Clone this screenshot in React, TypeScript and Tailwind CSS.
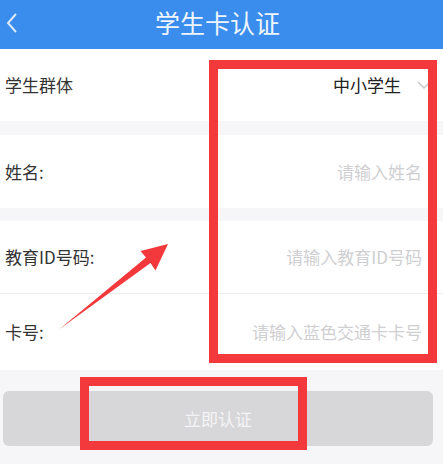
const FONT = "font-['Noto_Sans_CJK_SC','Noto_Sans',sans-serif]";

type Row = { label: string; hint: string; h: string };

const Field = ({ label, hint, h }: Row) => (
  <div className={`flex items-center justify-between bg-white pl-[5px] pr-[21px] ${h}`}>
    <span className="text-[17px] text-[#333]">{label}</span>
    <span className="text-[17px] text-[#cfcfd2]">{hint}</span>
  </div>
);

export default function App() {
  return (
    <div className={`relative h-[464px] w-[443px] overflow-hidden bg-[#f6f6f8] ${FONT}`}>
      {/* Header */}
      <header className="relative flex h-[49px] items-center justify-center bg-[#3a8ded]">
        <svg className="absolute left-[6px] top-[12px]" width="12" height="22" viewBox="0 0 12 22">
          <path d="M10 2 L2 11 L10 20" fill="none" stroke="#dbe9fb" strokeWidth="2" />
        </svg>
        <h1 className="pb-[3px] pr-[8px] text-[25px] text-[#eef5fe]">学生卡认证</h1>
      </header>

      {/* Group select */}
      <div className="flex h-[72px] items-center justify-between bg-white pl-[5px] pr-[12px]">
        <span className="text-[17px] text-[#333]">学生群体</span>
        <div className="flex items-center gap-[16px]">
          <span className="text-[17px] text-[#222]">中小学生</span>
          <svg width="14" height="10" viewBox="0 0 14 10">
            <path d="M1 2 L7 8 L13 2" fill="none" stroke="#c9c9cc" strokeWidth="1.5" />
          </svg>
        </div>
      </div>

      <div className="h-[14px]" />
      <Field label="姓名:" hint="请输入姓名" h="h-[73px]" />
      <div className="h-[13px]" />

      <Field label="教育ID号码:" hint="请输入教育ID号码" h="h-[72px]" />
      <div className="h-px bg-[#ececee]" />
      <Field label="卡号:" hint="请输入蓝色交通卡卡号" h="h-[76px]" />

      {/* Submit */}
      <div className="pl-[3px] pt-[21px]">
        <button className="flex h-[55px] w-[430px] items-center justify-center rounded-[6px] bg-[#d7d7d9] text-[17px] text-[#f4f4f6]">
          立即认证
        </button>
      </div>

      {/* Red markers */}
      <div className="absolute left-[209px] top-[60px] h-[303px] w-[228px] border-[9px] border-[#f4393c]" />
      <div className="absolute left-[80px] top-[377px] h-[73px] w-[227px] border-[9px] border-[#f4393c]" />
      <svg className="absolute left-0 top-0" width="443" height="464" viewBox="0 0 443 464">
        <polygon
          points="168,244 140.5,251 146,257.5 59,329.5 150.5,263 155.5,270.5"
          fill="#f4393c"
        />
      </svg>
    </div>
  );
}
